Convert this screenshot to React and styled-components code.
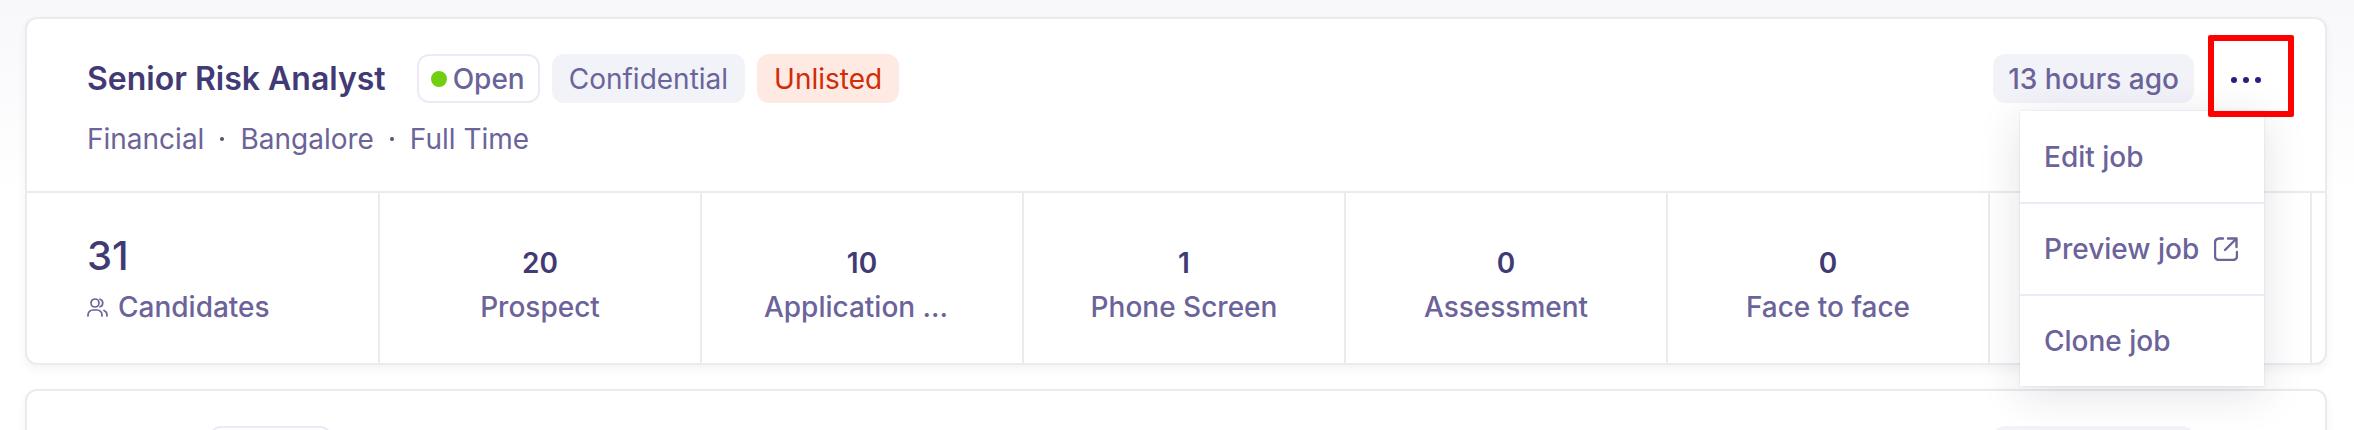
import React from "react";
import styled, { createGlobalStyle } from "styled-components";

const Global = createGlobalStyle`
  html, body { margin: 0; padding: 0; background: #fff; }
  body { font-family: Inter, "Liberation Sans", sans-serif; height: 430px; overflow: hidden; }
`;
const Page = styled.div`
  height: 430px; overflow: hidden; box-sizing: border-box;
  padding: 17px 27px 0 25px;
  background: linear-gradient(180deg, #f8f8fb 0, #fbfbfd 90px, #fff 200px);
`;
const Card = styled.section`
  box-sizing: border-box; border: 2px solid #ebebee; border-radius: 12px; background: #fff;
  box-shadow: 0 4px 10px rgba(40, 40, 80, 0.05);
  margin-bottom: 24px;
`;
const Header = styled.header`
  height: 172px; box-sizing: border-box; display: flex; justify-content: space-between;
  align-items: flex-start; padding: 35px 42px 0 60px;
`;
const TitleRow = styled.div`display: flex; align-items: center;`;
const Title = styled.h2`
  margin: 0 31px 0 0; font-size: 32px; line-height: 48px; font-weight: 600; color: #423a75; white-space: nowrap;
`;
const Badge = styled.span`
  box-sizing: border-box; height: 49px; display: inline-flex; align-items: center; padding: 0 17px; margin-right: 12px;
  border-radius: 12px; font-size: 28px; color: ${p => p.$color || "#6b6399"}; background: ${p => p.$bg || "#f2f3f9"};
  white-space: nowrap;
`;
const OpenBadge = styled(Badge)`
  background: #fff; border: 2px solid #ebeaf6; padding: 0 13px 0 12px; gap: 6px; font-weight: 500;
`;
const Dot = styled.i`width: 16px; height: 16px; border-radius: 50%; background: #72cf10;`;
const Meta = styled.div`
  display: flex; align-items: center; margin-top: 16px; font-size: 28px; line-height: 40px; color: #6b6399;
`;
const Sep = styled.span`
  width: 4px; height: 4px; border-radius: 50%; background: #565170; margin: 0 16px;
`;
const Right = styled.div`display: flex; align-items: flex-start; position: relative;`;
const TimeBadge = styled(Badge)`margin-right: 15px; padding: 0 15px; font-weight: 500;`;
const Kebab = styled.button`
  position: relative; width: 74px; height: 82px; margin-top: -19px; border: 0; background: none; padding: 8px 0 0;
  display: flex; align-items: center; justify-content: center; gap: 6px;
`;
const KDot = styled.i`width: 6px; height: 6px; border-radius: 50%; background: #2e1f7d;`;
const RedBox = styled.div`
  position: absolute; left: 215px; top: -19px; width: 86px; height: 82px; box-sizing: border-box;
  border: 6px solid #ff0000; border-radius: 2px; z-index: 3;
`;
const Menu = styled.ul`
  position: absolute; z-index: 2; top: 57px; right: 19px; width: 244px; margin: 0; padding: 0; list-style: none;
  background: #fff; box-shadow: 0 8px 40px rgba(40, 40, 80, 0.13), 0 0 2px rgba(40, 40, 80, 0.12);
`;
const MenuItem = styled.li`
  box-sizing: border-box; height: 92px; padding: 0 24px; display: flex; align-items: center; gap: 15px;
  font-size: 28px; font-weight: 500; color: #6b6399;
  &:first-child { height: 91px; }
  & + & { border-top: 2px solid #ebeaf6; }
`;
const Stats = styled.div`display: flex; border-top: 2px solid #ebebee; overflow: hidden; height: 170px;`;
const Stat = styled.div`
  box-sizing: border-box; flex: 0 0 322px; border-right: 2px solid #ebebee; display: flex; flex-direction: column;
  align-items: center; padding-top: 51px;
`;
const FirstStat = styled(Stat)`flex-basis: 353px; align-items: flex-start; padding: 37px 0 0 60px;`;
const Count = styled.div`font-size: 28px; line-height: 38px; font-weight: 600; color: #423a75;`;
const BigCount = styled(Count)`font-size: 40px; line-height: 52px; font-weight: 500;`;
const Label = styled.div`
  margin-top: 4px; padding-right: ${p => p.$shift || 0}px; font-size: 28px; line-height: 42px; font-weight: 500; color: #6b6399;
  display: flex; align-items: center; gap: 10px; white-space: nowrap;
`;
const Tail = styled.div`flex: 1;`;

const UsersIcon = () => (
  <svg width="21" height="19" viewBox="0 0 21 19" fill="none" stroke="#6b6399" strokeWidth="1.7" strokeLinecap="round" strokeLinejoin="round">
    <circle cx="8" cy="5" r="4" />
    <path d="M1 18v-1a5 5 0 0 1 5-5h4a5 5 0 0 1 5 5v1" />
    <path d="M13 1.2a4 4 0 0 1 0 7.6" />
    <path d="M20 18v-1a5 5 0 0 0-3-4.5" />
  </svg>
);
const ExternalIcon = () => (
  <svg width="24" height="24" viewBox="0 0 24 24" fill="none" stroke="#6b6399" strokeWidth="2.4" strokeLinecap="round" strokeLinejoin="round">
    <path d="M9 1.5H5a4 4 0 0 0-4 4V19a4 4 0 0 0 4 4h14a4 4 0 0 0 4-4v-4" />
    <path d="M14 1.5h8.5V10" />
    <path d="M22 2 11 13" />
  </svg>
);

const stages = [["20","Prospect"],["10","Application ...",12],["1","Phone Screen"],["0","Assessment"],["0","Face to face"],["",""]];

export default function App() {
  return (
    <Page>
      <Global />
      <Card>
        <Header>
          <div>
            <TitleRow>
              <Title>Senior Risk Analyst</Title>
              <OpenBadge><Dot />Open</OpenBadge>
              <Badge>Confidential</Badge>
              <Badge $bg="#ffe9e3" $color="#d12c06">Unlisted</Badge>
            </TitleRow>
            <Meta>Financial<Sep />Bangalore<Sep />Full Time</Meta>
          </div>
          <Right>
            <TimeBadge>13 hours ago</TimeBadge>
            <Kebab aria-label="More"><KDot /><KDot /><KDot /></Kebab>
            <RedBox />
            <Menu>
              <MenuItem>Edit job</MenuItem>
              <MenuItem>Preview job <ExternalIcon /></MenuItem>
              <MenuItem>Clone job</MenuItem>
            </Menu>
          </Right>
        </Header>
        <Stats>
          <FirstStat><BigCount>31</BigCount><Label><UsersIcon />Candidates</Label></FirstStat>
          {stages.map(([n, l, s], i) => <Stat key={i}><Count>{n}</Count><Label $shift={s}>{l}</Label></Stat>)}
          <Tail />
        </Stats>
      </Card>
      <Card>
        <Header>
          <div>
            <TitleRow>
              <Title>Intern</Title>
              <OpenBadge><Dot />Open</OpenBadge>
            </TitleRow>
          </div>
          <Right><TimeBadge>13 hours ago</TimeBadge><Kebab aria-label="More"><KDot /><KDot /><KDot /></Kebab></Right>
        </Header>
      </Card>
    </Page>
  );
}
